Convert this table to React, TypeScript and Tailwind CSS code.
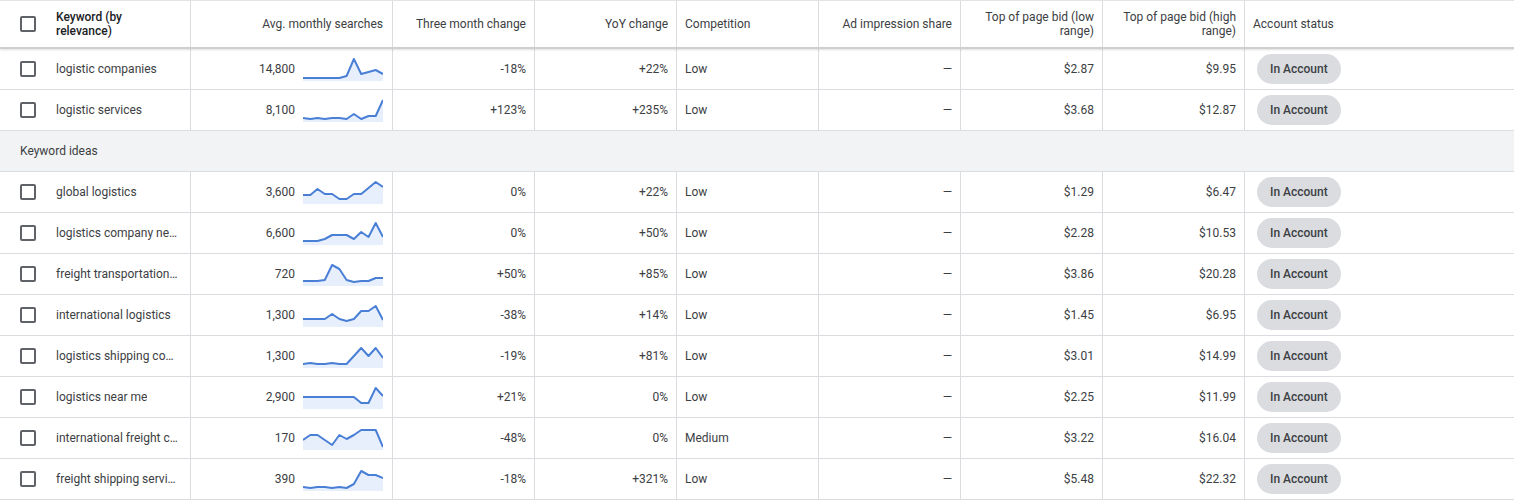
const GRID =
  "grid grid-cols-[191px_202px_142px_142px_142px_142px_142px_142px_1fr]";
const LINE = "border-r border-[#dadce0]";

type Row = {
  keyword: string;
  searches: string;
  trend: number[];
  three: string;
  yoy: string;
  competition: string;
  low: string;
  high: string;
};

const top: Row[] = [
  { keyword: "logistic companies", searches: "14,800", trend: [21, 21, 21, 21, 21, 21, 19, 2, 17, 15, 13, 17], three: "-18%", yoy: "+22%", competition: "Low", low: "$2.87", high: "$9.95" },
  { keyword: "logistic services", searches: "8,100", trend: [20, 21, 20, 21, 20, 20, 21, 16, 21, 18, 18, 2], three: "+123%", yoy: "+235%", competition: "Low", low: "$3.68", high: "$12.87" },
];

const ideas: Row[] = [
  { keyword: "global logistics", searches: "3,600", trend: [15, 15, 9, 14, 14, 19, 19, 14, 14, 8, 2, 7], three: "0%", yoy: "+22%", competition: "Low", low: "$1.29", high: "$6.47" },
  { keyword: "logistics company near me", searches: "6,600", trend: [20, 20, 20, 18, 14, 14, 14, 18, 11, 16, 2, 16], three: "0%", yoy: "+50%", competition: "Low", low: "$2.28", high: "$10.53" },
  { keyword: "freight transportation companies", searches: "720", trend: [19, 19, 19, 18, 3, 7, 18, 20, 19, 19, 16, 16], three: "+50%", yoy: "+85%", competition: "Low", low: "$3.86", high: "$20.28" },
  { keyword: "international logistics", searches: "1,300", trend: [16, 16, 16, 16, 11, 16, 18, 16, 8, 8, 3, 17], three: "-38%", yoy: "+14%", competition: "Low", low: "$1.45", high: "$6.95" },
  { keyword: "logistics shipping companies", searches: "1,300", trend: [20, 19, 20, 20, 19, 20, 20, 12, 4, 12, 4, 14], three: "-19%", yoy: "+81%", competition: "Low", low: "$3.01", high: "$14.99" },
  { keyword: "logistics near me", searches: "2,900", trend: [12, 12, 12, 12, 12, 12, 12, 12, 18, 18, 3, 11], three: "+21%", yoy: "0%", competition: "Low", low: "$2.25", high: "$11.99" },
  { keyword: "international freight companies", searches: "170", trend: [14, 9, 9, 14, 19, 9, 13, 9, 4, 4, 4, 21], three: "-48%", yoy: "0%", competition: "Medium", low: "$3.22", high: "$16.04" },
  { keyword: "freight shipping services", searches: "390", trend: [20, 21, 20, 20, 21, 20, 21, 17, 4, 8, 8, 11], three: "-18%", yoy: "+321%", competition: "Low", low: "$5.48", high: "$22.32" },
];

function Sparkline({ data }: { data: number[] }) {
  const step = 80 / (data.length - 1);
  const pts = data.map((y, i) => `${(i * step).toFixed(1)},${y}`).join(" ");
  return (
    <svg width="80" height="24" viewBox="0 0 80 24" className="shrink-0">
      <polygon points={`0,24 ${pts} 80,24`} fill="#e8effc" />
      <polyline points={pts} fill="none" stroke="#4a7fd6" strokeWidth="2" strokeLinejoin="round" />
    </svg>
  );
}

function Checkbox() {
  return <div className="w-4 h-4 border-2 border-[#5f6368] rounded-[2px] shrink-0" />;
}

function KeywordRow({ r }: { r: Row }) {
  return (
    <div className={`${GRID} h-[41px] border-b border-[#dadce0]`}>
      <div className={`${LINE} flex items-center pl-5 pr-3 min-w-0`}>
        <Checkbox />
        <span className="ml-5 truncate">{r.keyword}</span>
      </div>
      <div className={`${LINE} flex items-center justify-end gap-2 pr-[9px]`}>
        <span>{r.searches}</span>
        <Sparkline data={r.trend} />
      </div>
      <div className={`${LINE} flex items-center justify-end pr-2`}>{r.three}</div>
      <div className={`${LINE} flex items-center justify-end pr-2`}>{r.yoy}</div>
      <div className={`${LINE} flex items-center pl-2`}>{r.competition}</div>
      <div className={`${LINE} flex items-center justify-end pr-2`}>—</div>
      <div className={`${LINE} flex items-center justify-end pr-2`}>{r.low}</div>
      <div className={`${LINE} flex items-center justify-end pr-2`}>{r.high}</div>
      <div className="flex items-center pl-3">
        <span className="bg-[#dadce0] rounded-full h-[30px] px-[13px] flex items-center font-medium text-[#3c4043]">
          In Account
        </span>
      </div>
    </div>
  );
}

export default function App() {
  return (
    <div className="w-[1514px] h-[502px] bg-white text-[12px] leading-[14px] text-[#3c4043] font-['Roboto',sans-serif] overflow-hidden">
      <div className={`${GRID} h-[49px] border-t border-[#e3e3e3] border-b-2 border-b-[#cfcfcf] shadow-[0_1px_2px_rgba(0,0,0,0.12)] relative`}>
        <div className={`${LINE} flex items-center pl-5`}>
          <Checkbox />
          <span className="ml-5 font-medium text-[#202124]">Keyword (by<br />relevance)</span>
        </div>
        <div className={`${LINE} flex items-center justify-end pr-[9px]`}>Avg. monthly searches</div>
        <div className={`${LINE} flex items-center justify-end pr-2`}>Three month change</div>
        <div className={`${LINE} flex items-center justify-end pr-2`}>YoY change</div>
        <div className={`${LINE} flex items-center pl-2`}>Competition</div>
        <div className={`${LINE} flex items-center justify-end pr-2`}>Ad impression share</div>
        <div className={`${LINE} flex items-center justify-end text-right pr-2`}>Top of page bid (low<br />range)</div>
        <div className={`${LINE} flex items-center justify-end text-right pr-2`}>Top of page bid (high<br />range)</div>
        <div className="flex items-center pl-2">Account status</div>
      </div>
      {top.map((r) => (
        <KeywordRow key={r.keyword} r={r} />
      ))}
      <div className="h-[41px] bg-[#f1f3f4] border-b border-[#dadce0] flex items-center pl-5">Keyword ideas</div>
      {ideas.map((r) => (
        <KeywordRow key={r.keyword} r={r} />
      ))}
    </div>
  );
}
